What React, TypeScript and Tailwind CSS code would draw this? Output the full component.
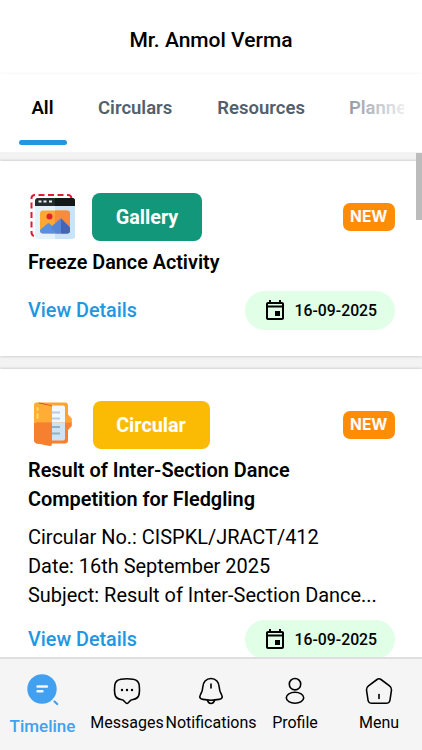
const iconProps = {
  viewBox: "0 0 30 30",
  fill: "none",
  stroke: "currentColor",
  strokeWidth: 1.6,
  strokeLinecap: "round",
  strokeLinejoin: "round",
} as const;

function GalleryIcon() {
  return (
    <svg className="-ml-px h-12 w-12" viewBox="0 0 48 48" fill="none">
      <path d="M44.500 5Q44 2 41 2H8Q4.500 2 4.500 5.500V39Q4.500 42.500 7 43" stroke="#da1f33" strokeWidth="2" strokeDasharray="6 3.500" />
      <path d="M8 11H48V43a3 3 0 0 1-3 3H11a3 3 0 0 1-3-3Z" fill="#e4f2fd" />
      <path d="M28 11H48V43a3 3 0 0 1-3 3H28Z" fill="#c9e3f8" />
      <path d="M8 13V8a3 3 0 0 1 3-3H45a3 3 0 0 1 3 3v5Z" fill="#252b2d" />
      <path d="M28 5H45a3 3 0 0 1 3 3v5H28Z" fill="#13191b" />
      <path d="M11.500 8.500h3M16.500 8.500h3M22 8.500h3" stroke="#e9f3fa" strokeWidth="2" />
      <rect x="13" y="17.500" width="30" height="23" rx="3" fill="#ffa733" />
      <path d="M28 17.500H40a3 3 0 0 1 3 3V37.500a3 3 0 0 1-3 3H28Z" fill="#fb8a3c" />
      <circle cx="22.500" cy="23.500" r="3" fill="#e3212b" />
      <path d="M13 37L20.500 30.500Q21.500 29.500 22.500 30.500L32 40.500H16a3 3 0 0 1-3-3Z" fill="#5b8edb" />
      <path d="M24 34L33 26Q34 25 35 26L43 34.500V37.500a3 3 0 0 1-3 3H30Z" fill="#5585d3" />
      <path d="M34 25.500L43 34.500V37.500a3 3 0 0 1-3 3H34Z" fill="#4266b5" />
    </svg>
  );
}

function FolderIcon() {
  return (
    <svg className="h-12 w-12" viewBox="0 0 48 48" fill="none">
      <path d="M8 1.500H37q3 0 3 3V13.500l3.800 4v4.500H8Z" fill="#ffa42d" />
      <path d="M8 21.500H43.800v3.500l-3.800 4V39.500q0 3-3 3H8Z" fill="#f9812e" />
      <path d="M22 4.500H35q2 0 2 2V21.500H22Z" fill="#f1f8fe" />
      <path d="M22 21.500H37V37.500q0 2-2 2H22Z" fill="#cfe3f5" />
      <path d="M24 11.500h8M24 17.500h8" stroke="#b9cde0" strokeWidth="2" />
      <path d="M24 26h8M24 32.500h8" stroke="#92b2bd" strokeWidth="2" />
      <path d="M11 1.500L24 4.500V7L10 4Z" fill="#d53b27" />
      <path d="M6 3.500Q6 1.500 8 1.700L22.500 4.700Q24 5 24 6.500V21.500H6Z" fill="#ffad35" />
      <path d="M6 21.500H24V42.500Q24 45.500 21.500 45L8 42.200Q6 41.700 6 39.500Z" fill="#f68030" />
      <path d="M9.500 7v2M9.500 13v4" stroke="#ffdd57" strokeWidth="2" strokeLinecap="round" />
    </svg>
  );
}

function DateChip() {
  return (
    <div className="flex h-[39px] w-[150.500px] items-center rounded-full bg-[#e1ffe7] pl-[18px] text-black">
      <svg className="mb-0.5 h-6 w-6 shrink-0" viewBox="0 0 24 24" fill="currentColor">
        <path d="M19 4h-1V2h-2v2H8V2H6v2H5c-1.110 0-1.990.9-1.990 2L3 20c0 1.100.89 2 2 2h14c1.100 0 2-.9 2-2V6c0-1.100-.9-2-2-2zm0 16H5V9.500h14V20zm0-12.500H5V6h14v1.500zm-7 5.500h5v5h-5z" />
      </svg>
      <span className="ml-2 whitespace-nowrap text-[15.800px] font-medium">16-09-2025</span>
    </div>
  );
}

function NewBadge() {
  return (
    <span className="flex h-7 w-[52.500px] items-center justify-center rounded-[7px] bg-[#ff8c05] font-[Inter,sans-serif] text-[15.500px] font-bold text-white">
      NEW
    </span>
  );
}

function CardFooter() {
  return (
    <div className="-mr-px flex items-center justify-between">
      <span className="pt-px text-[19.800px] font-medium text-[#2196e3]">View Details</span>
      <DateChip />
    </div>
  );
}

function BottomNav() {
  return (
    <nav className="flex h-[93px] shrink-0 border-t-2 border-[#dfdfdf] bg-[#f5f5f5] text-[16px] text-black">
      <div className="flex w-[85px] flex-col items-center text-[#42a0f0]">
        <svg className="mt-[13px] h-9 w-9" viewBox="0 0 36 36" fill="none">
          <circle cx="17" cy="17" r="14.700" fill="currentColor" />
          <path d="M12.500 14.500h9.500M12.500 19.300h5" stroke="#f5f5f5" strokeWidth="2.400" strokeLinecap="round" />
          <path d="M29.500 29.500l2.700 2.500" stroke="currentColor" strokeWidth="2.200" strokeLinecap="round" />
        </svg>
        <span className="mt-1.5 text-[17px] leading-6 font-medium">Timeline</span>
      </div>
      <div className="flex w-[84px] flex-col items-center">
        <svg className="mt-[17px] h-[30px] w-[30px]" {...iconProps}>
          <path d="M9 3.200Q15 2.200 21 3.200Q26.500 4 27.200 9Q27.800 14 27.200 18Q26.200 22.800 21 23.500Q18.500 23.800 17.500 25.500L16 27Q15 28 14 27L12.500 25.500Q11.500 23.800 9 23.500Q3.800 22.800 2.800 18Q2.200 14 2.800 9Q3.500 4 9 3.200Z" />
          <path d="M10 14h.01M15 14h.01M20 14h.01" strokeWidth="2.400" />
        </svg>
        <span className="mt-[5px] leading-6">Messages</span>
      </div>
      <div className="flex w-[84px] flex-col items-center">
        <svg className="mt-[17px] h-[30px] w-[30px]" {...iconProps}>
          <path d="M15 2.500C10 2.500 7 6.500 6.800 11Q6.700 15 4.500 18.500C3 21.500 4 23 7 23.400Q15 25 23 23.400C26 23 27 21.500 25.500 18.500Q23.300 15 23.200 11C23 6.500 20 2.500 15 2.500Z" />
          <path d="M11.500 24.500Q12.500 27.500 15 27.500T18.500 24.500M15 8v4" />
        </svg>
        <span className="mt-[5px] leading-6 whitespace-nowrap">Notifications</span>
      </div>
      <div className="flex w-[84px] flex-col items-center">
        <svg className="mt-[17px] h-[30px] w-[30px]" {...iconProps}>
          <circle cx="15" cy="8.200" r="5.700" />
          <ellipse cx="15" cy="21.800" rx="8.700" ry="5.500" />
        </svg>
        <span className="mt-[5px] leading-6">Profile</span>
      </div>
      <div className="flex w-[84px] flex-col items-center">
        <svg className="mt-[17px] h-[30px] w-[30px]" {...iconProps}>
          <path d="M13 3.500Q15 2 17 3.500L25.500 9.800Q27.800 11.500 27.500 14L26 24Q25.500 27.300 22 27.300H8Q4.500 27.300 4 24L2.500 14Q2.200 11.500 4.500 9.800Z" />
          <path d="M15 18.500v4" />
        </svg>
        <span className="mt-[5px] leading-6">Menu</span>
      </div>
    </nav>
  );
}

export default function App() {
  return (
    <div className="flex h-[750px] w-[422px] flex-col overflow-hidden bg-white font-[Roboto,sans-serif] text-black">
      <header className="flex h-[74px] shrink-0 items-center justify-center pt-[7px]">
        <h1 className="text-[21px] font-medium">Mr. Anmol Verma</h1>
      </header>

      {/* Category tabs */}
      <div className="relative flex h-[78px] shrink-0 bg-white px-[18px] text-[18.500px] leading-[27px] font-semibold whitespace-nowrap text-[#52606d] shadow-[0_-1px_3px_#0000000a]">
        <div className="relative flex w-12 shrink-0 justify-center pt-[21px] pl-px text-black">
          All
          <span className="absolute bottom-[7px] left-px h-[5px] w-12 rounded-full bg-[#2196e3]" />
        </div>
        <div className="ml-8 pt-[21px]">Circulars</div>
        <div className="ml-[45px] pt-[21px]">Resources</div>
        <div className="ml-[44px] w-[55px] shrink-0 overflow-hidden pt-[21px]">Planne</div>
        <div className="absolute top-0 right-[17px] h-full w-[95px] bg-linear-to-r from-white/0 to-white/90" />
      </div>

      <main className="relative min-h-0 flex-1 overflow-hidden bg-[#f3f3f3] pt-[9px]">
        <section className="h-[195px] bg-white px-7 pt-[32px] shadow-[0_0_3px_#00000040]">
          <div className="flex items-center">
            <GalleryIcon />
            <span className="ml-[17px] flex h-[47.500px] w-[110px] items-center justify-center rounded-lg bg-[#12977a] pt-0.5 text-[19.800px] font-bold text-white">Gallery</span>
            <div className="-mr-px ml-auto"><NewBadge /></div>
          </div>
          <h2 className="mt-[7px] text-[19.800px] leading-[29px] font-semibold">Freeze Dance Activity</h2>
          <div className="mt-[14px]"><CardFooter /></div>
        </section>

        <section className="mt-[13px] h-[320px] bg-white px-7 pt-[32px] shadow-[0_0_3px_#00000040]">
          <div className="flex items-center">
            <FolderIcon />
            <span className="ml-[16.500px] flex h-[47.500px] w-[117px] items-center justify-center rounded-lg bg-[#fbbb05] pt-0.5 text-[19.800px] font-bold text-white">Circular</span>
            <div className="-mr-px ml-auto"><NewBadge /></div>
          </div>
          <h2 className="mt-[7px] text-[19.900px] leading-[29px] font-semibold">
            Result of Inter-Section Dance
            <br />
            Competition for Fledgling
          </h2>
          <p className="mt-[9px] text-[19.950px] leading-[29px] whitespace-nowrap">
            Circular No.: CISPKL/JRACT/412
            <br />
            Date: 16th September 2025
            <br />
            Subject: Result of Inter-Section Dance...
          </p>
          <div className="mt-[10px]"><CardFooter /></div>
        </section>

        <div className="absolute top-px right-0 h-[67px] w-[6px] bg-[#bcbcbc]" />
      </main>

      <BottomNav />
    </div>
  );
}
